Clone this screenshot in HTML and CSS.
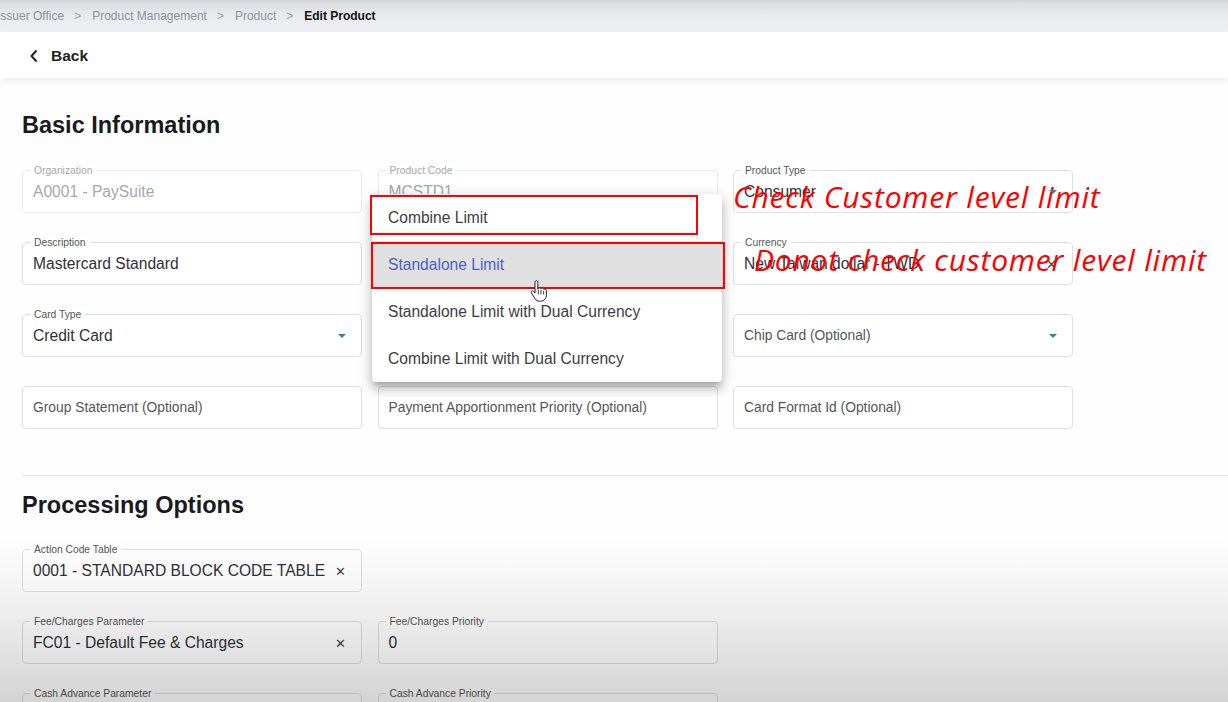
FILE: index.html
```html
<!DOCTYPE html>
<html lang="en">
<head>
<meta charset="utf-8">
<title>Edit Product</title>
<link rel="stylesheet" href="styles.css">
</head>
<body>
<div class="page">
  <nav class="breadcrumb">
    <span class="crumb">Issuer Office</span>
    <span class="sep">&gt;</span>
    <span class="crumb">Product Management</span>
    <span class="sep">&gt;</span>
    <span class="crumb">Product</span>
    <span class="sep">&gt;</span>
    <span class="crumb current">Edit Product</span>
  </nav>

  <header class="backbar">
    <svg class="chev" width="10" height="14" viewBox="0 0 10 14"><path d="M7.5 1.5 L2.5 7 L7.5 12.5" fill="none" stroke="#222" stroke-width="2"/></svg>
    <span class="back">Back</span>
  </header>

  <main class="content">
    <h2 class="section-title first">Basic Information</h2>
    <div class="grid basic">
      <div class="field disabled"><span class="label">Organization</span><span class="value">A0001 - PaySuite</span></div>
      <div class="field disabled"><span class="label">Product Code</span><span class="value">MCSTD1</span></div>
      <div class="field"><span class="label">Product Type</span><span class="value">Consumer</span><span class="arrow"></span></div>

      <div class="field"><span class="label">Description</span><span class="value">Mastercard Standard</span></div>
      <div class="field"><span class="label">Limit Type</span><span class="value">Standalone Limit</span></div>
      <div class="field"><span class="label">Currency</span><span class="value">New Taiwan dollar - TWD</span><span class="clear">&#x2715;</span></div>

      <div class="field"><span class="label">Card Type</span><span class="value">Credit Card</span><span class="arrow"></span></div>
      <div class="field"><span class="placeholder">Card Brand</span></div>
      <div class="field"><span class="placeholder">Chip Card (Optional)</span><span class="arrow"></span></div>

      <div class="field"><span class="placeholder">Group Statement (Optional)</span></div>
      <div class="field"><span class="placeholder">Payment Apportionment Priority (Optional)</span></div>
      <div class="field"><span class="placeholder">Card Format Id (Optional)</span></div>

      <ul class="menu">
        <li class="item">Combine Limit</li>
        <li class="item active">Standalone Limit</li>
        <li class="item">Standalone Limit with Dual Currency</li>
        <li class="item">Combine Limit with Dual Currency</li>
      </ul>
      <div class="mark mark-one"></div>
      <div class="mark mark-two"></div>
      <svg class="cursor" width="18" height="22" viewBox="0 0 18 22">
        <path d="M5 2.2c0-.9.6-1.5 1.4-1.5S7.8 1.3 7.8 2.2V9l.3-.1c.2-.8.8-1.2 1.5-1.2.8 0 1.3.5 1.4 1.2.3-.5.8-.8 1.4-.8.8 0 1.4.6 1.4 1.4.3-.3.7-.5 1.2-.5.8 0 1.4.6 1.4 1.4v4.4c0 3.4-2.2 6.4-5.6 6.4H9.3c-1.8 0-3.1-.9-4.1-2.3L1.4 13c-.5-.7-.4-1.6.3-2 .6-.4 1.4-.3 1.9.3L5 13V2.2z" fill="#fff" stroke="#222" stroke-width="1"/>
        <path d="M8.3 10v4.5M11 10v4.5M13.6 11v3.5" stroke="#222" stroke-width=".9"/>
      </svg>
      <div class="note note-one">Check Customer level limit</div>
      <div class="note note-two">Donot check customer level limit</div>
    </div>

    <hr class="divider">

    <h2 class="section-title">Processing Options</h2>
    <div class="grid">
      <div class="field"><span class="label">Action Code Table</span><span class="value">0001 - STANDARD BLOCK CODE TABLE</span><span class="clear">&#x2715;</span></div>
      <div class="empty"></div>
      <div class="empty"></div>

      <div class="field"><span class="label">Fee/Charges Parameter</span><span class="value">FC01 - Default Fee &amp; Charges</span><span class="clear">&#x2715;</span></div>
      <div class="field"><span class="label">Fee/Charges Priority</span><span class="value">0</span></div>
      <div class="empty"></div>

      <div class="field"><span class="label">Cash Advance Parameter</span><span class="value"></span></div>
      <div class="field"><span class="label">Cash Advance Priority</span><span class="value"></span></div>
      <div class="empty"></div>
    </div>
  </main>
  <div class="vignette"></div>
</div>
</body>
</html>
```
FILE: styles.css
```css
html, body {
  margin: 0;
  padding: 0;
}
body {
  font-family: "Liberation Sans", Arial, sans-serif;
  color: #333;
  background: #fefefe;
  width: 1228px;
  height: 702px;
  overflow: hidden;
}
.page {
  position: relative;
  height: 702px;
  overflow: hidden;
}

/* breadcrumb */
.breadcrumb {
  height: 32px;
  display: flex;
  align-items: center;
  margin-left: -3px;
  font-size: 12px;
  color: #8e9298;
  background: linear-gradient(to bottom, #d2d3d6 0, #dcdee2 3px, #e8eaee 16px, #eff1f5 32px);
}
.sep {
  margin: 0 11px 0 10px;
  color: #9a9ea4;
}
.crumb.current {
  color: #111;
  font-weight: bold;
}

/* back bar */
.backbar {
  height: 46px;
  display: flex;
  align-items: center;
  padding-left: 29px;
  padding-top: 1px;
  box-sizing: border-box;
  background: #fff;
  box-shadow: 0 3px 8px rgba(0, 0, 0, 0.07);
  position: relative;
}
.chev {
  margin-right: 12px;
}
.back {
  font-size: 15.5px;
  font-weight: bold;
  color: #222;
}

/* content */
.content {
  padding: 0 0 0 22px;
  border-left: 1px solid #ececec;
  margin-left: -1px;
}
.section-title {
  margin: 15px 0 0 0;
  font-size: 23.5px;
  line-height: 28px;
  font-weight: bold;
  color: #181a1e;
}
.section-title.first {
  margin-top: 33px;
}
.grid {
  position: relative;
  margin-top: 30px;
  display: grid;
  grid-template-columns: repeat(3, 340px);
  column-gap: 15.5px;
  row-gap: 29px;
}
.grid.basic {
  margin-top: 31px;
}
.field {
  position: relative;
  height: 43px;
  box-sizing: border-box;
  border: 1px solid #dedfe1;
  border-radius: 4px;
  padding: 0 10px;
  display: flex;
  align-items: center;
  background: #fff;
}
.empty {
  height: 43px;
}
.label {
  position: absolute;
  top: -6px;
  left: 7px;
  padding: 0 4px;
  background: #fff;
  font-size: 10.3px;
  line-height: 12px;
  color: #555;
}
.value {
  font-size: 15.6px;
  color: #2f3136;
  white-space: nowrap;
}
.placeholder {
  font-size: 13.8px;
  color: #555;
  white-space: nowrap;
}
.field.disabled {
  border-color: #ececee;
}
.field.disabled .label {
  color: #a5a7aa;
}
.field.disabled .value {
  color: #a5a8ae;
}
.arrow {
  position: absolute;
  right: 15px;
  top: 50%;
  margin-top: -2px;
  width: 0;
  height: 0;
  border-left: 4.5px solid transparent;
  border-right: 4.5px solid transparent;
  border-top: 4.5px solid #2b8a8f;
}
.clear {
  position: absolute;
  right: 15px;
  top: 50%;
  transform: translateY(-50%);
  font-size: 13px;
  color: #444;
}

/* dropdown menu */
.menu {
  position: absolute;
  left: 350px;
  top: 24px;
  width: 350px;
  margin: 0;
  padding: 0;
  list-style: none;
  background: #fff;
  border-radius: 4px;
  box-shadow: 0 5px 5px -3px rgba(0,0,0,0.2), 0 8px 10px 1px rgba(0,0,0,0.14), 0 3px 14px 2px rgba(0,0,0,0.12);
  z-index: 5;
}
.item {
  height: 47px;
  display: flex;
  align-items: center;
  padding-left: 16px;
  font-size: 15.6px;
  color: #3c3d40;
}
.item.active {
  background: #e0e0e0;
  color: #4d5fc6;
}

/* annotations */
.mark {
  position: absolute;
  border: 2px solid #f00;
  box-sizing: border-box;
  z-index: 6;
}
.mark-one {
  left: 348px;
  top: 25px;
  width: 328px;
  height: 40px;
}
.mark-two {
  left: 349px;
  top: 72px;
  width: 354px;
  height: 47px;
}
.cursor {
  position: absolute;
  left: 508px;
  top: 110px;
  z-index: 7;
}
.note {
  position: absolute;
  z-index: 7;
  font-family: "Open Sans", "Noto Sans", sans-serif;
  font-style: italic;
  font-size: 30px;
  line-height: 34px;
  letter-spacing: 0.8px;
  color: #ff0000;
  white-space: nowrap;
}
.note-one {
  left: 711px;
  top: 10px;
}
.note-two {
  left: 732px;
  top: 73px;
}

.divider {
  margin: 46px 0 0 0;
  border: 0;
  border-top: 1px solid #e6e6e8;
  height: 0;
}

.vignette {
  position: absolute;
  left: 0;
  top: 0;
  width: 100%;
  height: 100%;
  pointer-events: none;
  z-index: 20;
  background: linear-gradient(to bottom, rgba(0,0,0,0) 0, rgba(0,0,0,0) 540px, rgba(0,0,0,0.05) 600px, rgba(0,0,0,0.12) 660px, rgba(0,0,0,0.17) 702px);
}
```
